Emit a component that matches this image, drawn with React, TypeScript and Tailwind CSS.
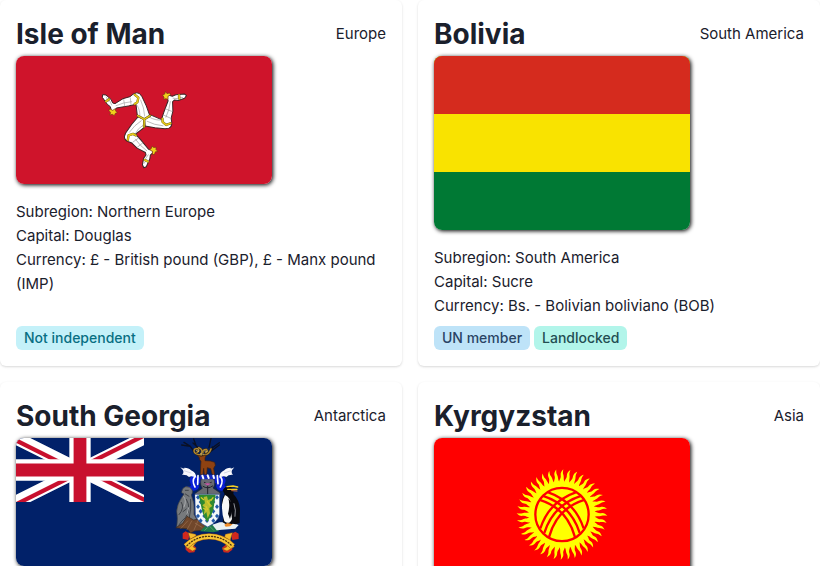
import type { ReactNode } from "react";

function IsleOfManFlag() {
  return (
    <svg viewBox="0 0 256 128" className="block w-full" role="img" aria-label="Flag of Isle of Man">
      <rect width="256" height="128" fill="#cf142b" />
      <g transform="translate(79 24) scale(.3333)" strokeLinejoin="round" strokeLinecap="round">
        {[0, 120, 240].map((angle) => (
          <g key={angle} transform={`rotate(${angle} 148 118)`}>
            <path
              d="M148 118L127 107L123 73L100 78L64 84L58 93L49 92L46 80L37 73L22 52L23 44L33 45L48 58L53 69L60 71L84 56L105 50L115 42Q126 35 134 41L141 50L154 78L164 106Z"
              fill="#fff"
              stroke="#3d2426"
              strokeWidth="3"
            />
            <path
              d="M124 73Q134 84 135 108M137 60Q148 84 149 108M63 77Q85 67 110 65M86 58L89 78M106 54L108 74M34 51L40 65M42 58L50 75"
              fill="none"
              stroke="#999"
              strokeWidth="1.8"
            />
            <path d="M119 44L130 53L127 67L119 72M33 64L42 58" fill="none" stroke="#6c5a12" strokeWidth="7" />
            <path d="M119 44L130 53L127 67L119 72M33 64L42 58" fill="none" stroke="#e6ca1a" strokeWidth="5" />
            <path
              d="M45 87L53 91L61 86L62 93L67 98L61 100L58 107L52 103L44 105L47 98L42 92Z"
              fill="#f0d01c"
              stroke="#7c3414"
              strokeWidth="2"
            />
          </g>
        ))}
        <path d="M128 107L148 118L165 107M148 118L147 141" fill="none" stroke="#5e4d12" strokeWidth="7" />
        <path d="M128 107L148 118L165 107M148 118L147 141" fill="none" stroke="#e2ca1c" strokeWidth="4" />
      </g>
    </svg>
  );
}

function BoliviaFlag() {
  return (
    <svg viewBox="0 0 256 174" className="block w-full" role="img" aria-label="Flag of Bolivia">
      <rect width="256" height="174" fill="#007934" />
      <rect width="256" height="116" fill="#f9e300" />
      <rect width="256" height="58" fill="#d52b1e" />
    </svg>
  );
}

function UnionCanton() {
  return (
    <svg viewBox="0 0 60 30" width="128" height="64">
      <clipPath id="saltire">
        <path d="M30 15H60V30ZM30 15V30H0ZM30 15H0V0ZM30 15V0H60Z" />
      </clipPath>
      <path d="M0 0L60 30M60 0L0 30" stroke="#fff" strokeWidth="6" />
      <path d="M0 0L60 30M60 0L0 30" stroke="#c8102e" strokeWidth="4" clipPath="url(#saltire)" />
      <path d="M30 0V30M0 15H60" stroke="#fff" strokeWidth="10" />
      <path d="M30 0V30M0 15H60" stroke="#c8102e" strokeWidth="6" />
    </svg>
  );
}

function SouthGeorgiaFlag() {
  return (
    <svg viewBox="0 0 256 128" className="block w-full" role="img" aria-label="Flag of South Georgia">
      <rect width="256" height="128" fill="#012169" />
      <UnionCanton />
      <g transform="translate(149 -3) scale(.3333)" strokeLinejoin="round" strokeLinecap="round">
        {/* antlers */}
        <path
          d="M113 62Q86 60 84 45M118 62Q140 55 142 36M84 45L76 34L50 30M76 34L57 22M94 34L86 12M101 40L84 24M132 38L138 10M140 40L163 23M139 48L163 30"
          fill="none"
          stroke="#0b1022"
          strokeWidth="4"
        />
        <path
          d="M110 60Q88 59 87 48Q88 39 98 41Q106 47 96 52M108 57Q116 44 101 38M117 60Q132 60 138 42M114 53Q112 43 124 43Q131 48 122 53"
          fill="none"
          stroke="#3a2b12"
          strokeWidth="7"
        />
        <path
          d="M110 60Q88 59 87 48Q88 39 98 41Q106 47 96 52M108 57Q116 44 101 38M117 60Q132 60 138 42M114 53Q112 43 124 43Q131 48 122 53"
          fill="none"
          stroke="#b08a35"
          strokeWidth="4"
        />
        <path d="M94 46L101 49M119 48L126 49M107 56L116 58" stroke="#e4d08a" strokeWidth="2" />
        {/* stag */}
        <path
          d="M97 61L108 64L116 62L124 60L120 69L120 77L136 78L149 82L151 91L146 100L149 119L142 119L137 101L127 98L125 119L118 119L116 100L114 119L106 119L107 94L108 78L104 75L103 68Z"
          fill="#8e4212"
          stroke="#40200d"
          strokeWidth="2"
        />
        {/* mantling */}
        <path
          d="M90 120Q70 124 75 142Q82 158 69 154Q76 171 92 166Q106 161 100 144Q113 148 106 128ZM160 120Q186 124 181 142Q173 158 189 153Q180 171 163 166Q149 160 155 144Q141 148 149 128Z"
          fill="#0a1fd8"
        />
        <path
          d="M89 126Q80 138 90 156M167 126Q176 138 166 156M99 122L98 148M157 122L159 146"
          fill="none"
          stroke="#fff"
          strokeWidth="5"
        />
        <path
          d="M46 97Q60 104 58 98Q72 98 78 106Q93 112 94 128Q80 120 72 126Q66 118 51 119Q62 112 46 97ZM208 97Q195 104 197 98Q183 98 178 106Q164 112 162 128Q176 120 184 126Q190 118 204 119Q194 112 208 97Z"
          fill="#f8f8fc"
        />
        <path d="M57 107L78 114M198 107L178 114" stroke="#aab3cc" strokeWidth="1.5" />
        {/* helmet */}
        <path
          d="M108 132L128 127L147 132Q152 150 144 159L166 174L163 186H93L89 176L112 160Q104 149 108 132Z"
          fill="#686b72"
          stroke="#24272f"
          strokeWidth="2"
        />
        <rect x="104" y="119" width="48" height="14" rx="6" fill="#1427bd" />
        <path d="M112 122L115 130M128 121L131 129M145 122L147 129" stroke="#fff" strokeWidth="6" />
        <path d="M118 142L128 148L139 142M114 154Q128 164 143 153M128 150V179" fill="none" stroke="#20222c" strokeWidth="3" />
        <path d="M118 145L138 145L128 152Z" fill="#c85aa7" />
        {/* seal */}
        <path
          d="M53 161Q61 151 74 157Q88 166 79 180Q91 207 87 238L100 262L85 282L52 270L35 277Q39 250 35 229Q36 207 51 186L57 177L50 173Z"
          fill="#777a7d"
          stroke="#3c3f43"
          strokeWidth="2"
        />
        <path
          d="M61 166L70 166M61 177L72 184M49 202Q60 218 42 239M64 193Q80 219 62 247Q49 258 41 271M77 193Q79 225 73 248M54 230L64 222"
          fill="none"
          stroke="#404348"
          strokeWidth="3"
        />
        <path d="M56 185Q66 196 57 216M71 218L66 238" fill="none" stroke="#a9abad" strokeWidth="3" />
        {/* rocks, grass and ice */}
        <path
          d="M33 278L53 265L66 244L86 255L105 251L123 268L128 285L89 288L77 294L67 282Z"
          fill="#71472b"
          stroke="#38281e"
          strokeWidth="2"
        />
        <path d="M48 280L68 258M66 284L80 258M87 285L99 257M111 277L91 265" stroke="#9c7050" strokeWidth="2" />
        <path d="M105 289L126 267L148 269L163 288L145 292Z" fill="#1f7a4c" />
        <path d="M119 286L133 273L146 286" fill="none" stroke="#55a062" strokeWidth="3" />
        <path d="M142 269L164 262L193 261L221 270L211 281L171 284L155 286Z" fill="#e9f0f2" />
        {/* shield */}
        <path
          d="M90 178H164V237Q160 261 128 276Q96 261 91 239Z"
          fill="#f4f7f8"
          stroke="#1b3c89"
          strokeWidth="2"
        />
        {[0, 1, 2, 3, 4, 5].flatMap((row) =>
          [0, 1, 2, 3].map((col) => {
            const x = 99 + col * 19 + (row % 2) * 8;
            const y = 187 + row * 14;
            return x < 161 ? (
              <path key={`${row}-${col}`} d={`M${x} ${y - 7}L${x + 6} ${y}L${x} ${y + 7}L${x - 6} ${y}Z`} fill="#2359a8" />
            ) : null;
          }),
        )}
        <path d="M101 179H152L145 224Q139 246 127 261Q114 244 110 221Z" fill="#2f8a2f" />
        <path
          d="M116 186L126 184L129 195L139 191L134 204L142 213L133 219L135 235L128 250L124 231L116 240L120 219L112 211L120 205Z"
          fill="#b8bd2e"
        />
        <path
          d="M109 188L116 194M144 188L138 196M127 199L134 210M123 214L128 224M116 220L123 225"
          stroke="#d9c92c"
          strokeWidth="4"
        />
        {/* penguin */}
        <path
          d="M173 166Q183 150 197 155Q208 162 205 177Q223 195 225 222L224 264L212 268L204 266L188 271L173 262Q178 236 170 211Q170 190 179 178Z"
          fill="#08090f"
        />
        <path d="M180 180Q200 190 196 212L201 252Q193 271 178 259Q170 235 171 209Q174 190 180 180Z" fill="#f8f8f7" />
        <path d="M190 190Q196 210 189 236L195 252Q204 227 201 205Z" fill="#08090f" />
        <path d="M207 206Q214 226 210 244" fill="none" stroke="#d7dae2" strokeWidth="2" />
        <path d="M186 155L204 153L218 156M188 163L216 163" fill="none" stroke="#f5cf24" strokeWidth="4" />
        <path d="M200 167L216 168" stroke="#db7335" strokeWidth="3" />
        <path d="M178 269L187 264L203 268L195 274L182 275Z" fill="#ee8a26" />
        {/* motto ribbon */}
        <path
          d="M53 295L62 289L74 296L70 315L53 311ZM61 331L80 326L94 338L88 352L72 353L62 344ZM221 296L211 290L198 297L202 315L221 312ZM202 331L186 326L171 338L176 352L190 353L202 344Z"
          fill="#d0281e"
        />
        <path
          d="M70 293L92 298L97 318L84 335L94 342L82 348L62 335L76 316ZM202 293L181 298L176 318L186 335L172 342L186 348L208 335L196 316Z"
          fill="#f6bc2c"
          stroke="#8b4d19"
          strokeWidth="1.5"
        />
        <path d="M63 334Q92 304 132 304Q174 304 203 334" fill="none" stroke="#8b4d19" strokeWidth="19" strokeLinecap="butt" />
        <path d="M63 334Q92 304 132 304Q174 304 203 334" fill="none" stroke="#f6c433" strokeWidth="16" strokeLinecap="butt" />
        <path
          d="M66 332Q93 304 132 304Q173 304 200 332"
          fill="none"
          stroke="#4a3013"
          strokeWidth="4"
          strokeDasharray="3 6"
        />
      </g>
    </svg>
  );
}

function KyrgyzstanFlag() {
  const rays = Array.from({ length: 40 }, (_, i) => i * 9);
  return (
    <svg viewBox="0 0 256 154" className="block w-full" role="img" aria-label="Flag of Kyrgyzstan">
      <rect width="256" height="154" fill="#f00" />
      <g transform="translate(128 76.5) scale(.3333)">
        {rays.map((angle) => (
          <path
            key={angle}
            transform={`rotate(${angle})`}
            d="M-9 -94C-9 -105 -2 -109 -4 -118C-5 -126 -1 -131 4 -136C3 -129 2 -125 4 -119C7 -110 3 -105 9 -94Z"
            fill="#ff0"
          />
        ))}
        <circle r="99" fill="#ff0" />
        <circle r="80" fill="none" stroke="#f00" strokeWidth="7" />
        <g fill="none" stroke="#f00" strokeWidth="7">
          <path d="M-65 42Q-39 -39 43 -67M-53 55Q-26 -29 57 -56M-39 68Q-16 -18 67 -44" />
          <path d="M65 42Q39 -39 -43 -67M53 55Q26 -29 -57 -56M39 68Q16 -18 -67 -44" />
        </g>
      </g>
    </svg>
  );
}

type Tag = { label: string; className: string };

const tags = {
  notIndependent: { label: "Not independent", className: "bg-[#c4f1f9] text-[#086f83]" },
  unMember: { label: "UN member", className: "bg-[#bee3f8] text-[#2a4365]" },
  landlocked: { label: "Landlocked", className: "bg-[#b2f5ea] text-[#234e52]" },
};

type Country = {
  name: string;
  region: string;
  flag: ReactNode;
  facts?: string[];
  tags?: Tag[];
};

const countries: Country[] = [
  {
    name: "Isle of Man",
    region: "Europe",
    flag: <IsleOfManFlag />,
    facts: [
      "Subregion: Northern Europe",
      "Capital: Douglas",
      "Currency: £ - British pound (GBP), £ - Manx pound (IMP)",
    ],
    tags: [tags.notIndependent],
  },
  {
    name: "Bolivia",
    region: "South America",
    flag: <BoliviaFlag />,
    facts: ["Subregion: South America", "Capital: Sucre", "Currency: Bs. - Bolivian boliviano (BOB)"],
    tags: [tags.unMember, tags.landlocked],
  },
  { name: "South Georgia", region: "Antarctica", flag: <SouthGeorgiaFlag /> },
  { name: "Kyrgyzstan", region: "Asia", flag: <KyrgyzstanFlag /> },
];

function CountryCard({ country }: { country: Country }) {
  return (
    <article className="flex flex-col rounded-md bg-white p-4 shadow-[0_1px_3px_rgba(0,0,0,0.1),0_1px_2px_rgba(0,0,0,0.06)]">
      <header className="mb-1 flex items-center justify-between">
        <h2 className="text-[28px]/9 font-bold">{country.name}</h2>
        <p>{country.region}</p>
      </header>
      <div className="mb-4 w-64 overflow-hidden rounded-lg shadow-[1px_1px_4px_#000]">{country.flag}</div>
      {country.facts && (
        <div className="mb-2">
          {country.facts.map((fact) => (
            <p key={fact}>{fact}</p>
          ))}
        </div>
      )}
      {country.tags && (
        <div className="mt-auto flex flex-wrap gap-1">
          {country.tags.map((tag) => (
            <span key={tag.label} className={`rounded-md px-2 text-sm/6 font-medium ${tag.className}`}>
              {tag.label}
            </span>
          ))}
        </div>
      )}
    </article>
  );
}

export default function App() {
  return (
    <main className="bg-white font-['Inter','Liberation_Sans',sans-serif] text-[15px]/6 text-[#1a202c]">
      <div className="grid grid-cols-2 gap-4">
        {countries.map((country) => (
          <CountryCard key={country.name} country={country} />
        ))}
      </div>
    </main>
  );
}
